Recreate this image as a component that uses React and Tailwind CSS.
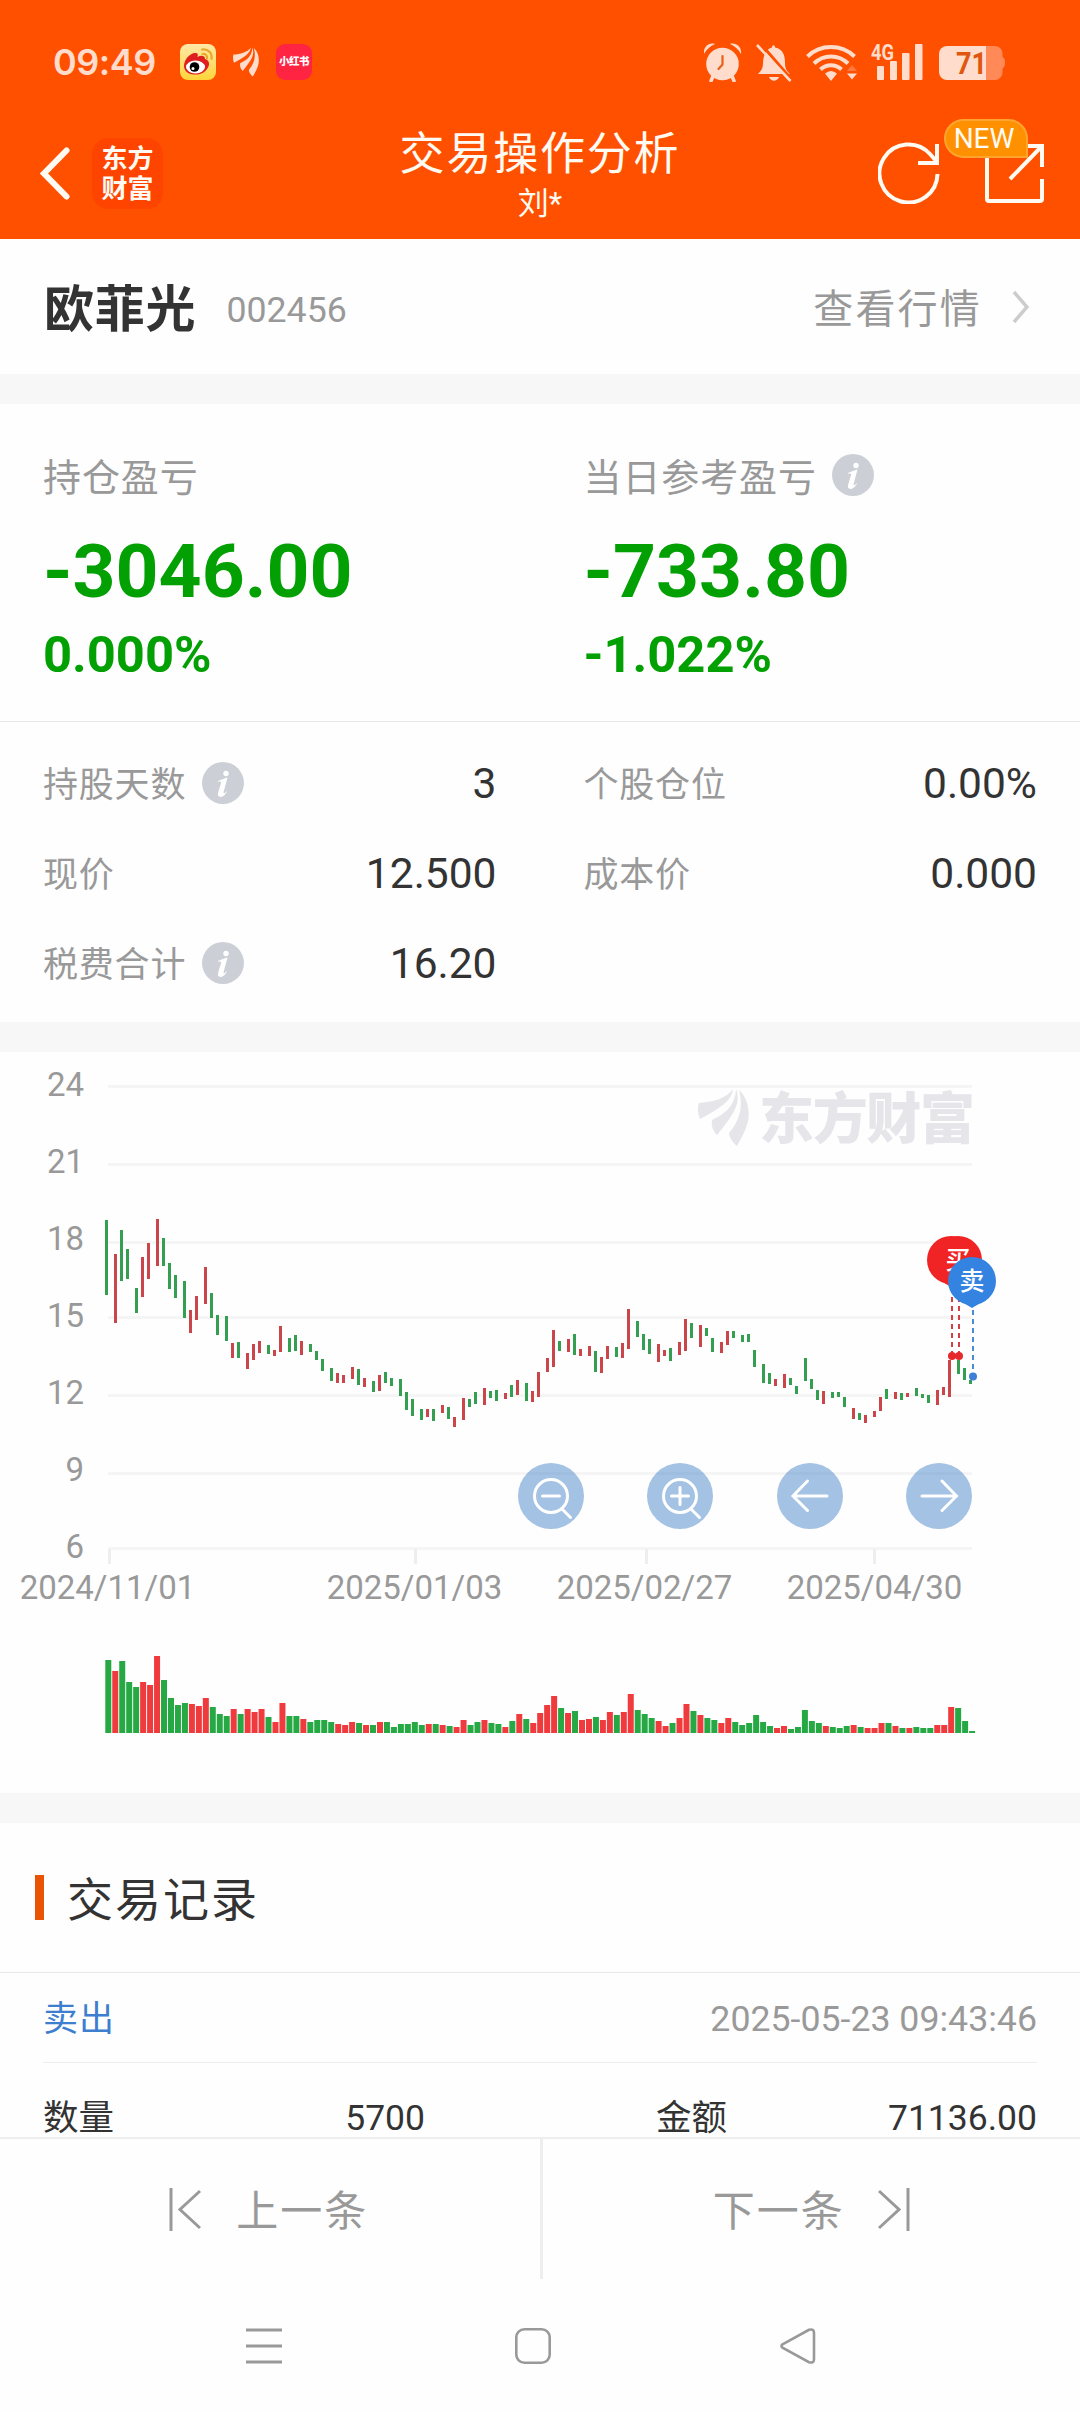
import React from "react";

// [direction, top, bottom, volume], g = falling day, r = rising day
const CANDLES = [
  ["g", 20, 95, 73], ["r", 54, 123, 62], ["g", 30, 81, 72], ["g", 49, 79, 51],
  ["g", 88, 113, 46], ["r", 57, 97, 51], ["r", 43, 79, 48], ["r", 19, 66, 77],
  ["g", 38, 66, 53], ["g", 63, 89, 35], ["g", 75, 98, 28], ["g", 81, 118, 30],
  ["r", 110, 133, 29], ["r", 96, 120, 27], ["r", 67, 104, 35], ["g", 93, 118, 26],
  ["g", 115, 135, 19], ["g", 116, 141, 17], ["r", 143, 158, 24], ["g", 142, 158, 19],
  ["r", 153, 169, 24], ["r", 144, 160, 21], ["r", 141, 153, 24], ["g", 145, 154, 16],
  ["r", 150, 156, 11], ["r", 126, 152, 30], ["g", 138, 152, 17], ["g", 135, 151, 17],
  ["r", 141, 155, 14], ["g", 144, 152, 11], ["g", 151, 160, 13], ["g", 159, 171, 13],
  ["g", 168, 181, 11], ["r", 173, 183, 9], ["r", 175, 183, 8], ["r", 167, 179, 11],
  ["g", 169, 185, 10], ["r", 178, 187, 8], ["g", 181, 192, 8], ["r", 175, 191, 11],
  ["g", 172, 183, 11], ["g", 178, 186, 6], ["g", 179, 196, 9], ["g", 192, 210, 9],
  ["g", 199, 216, 11], ["g", 209, 220, 8], ["r", 209, 217, 9], ["g", 209, 221, 9],
  ["r", 205, 213, 8], ["g", 207, 219, 7], ["r", 217, 227, 6], ["r", 198, 220, 13],
  ["g", 199, 207, 8], ["g", 192, 204, 11], ["r", 188, 205, 13], ["g", 191, 198, 10],
  ["g", 190, 201, 9], ["r", 193, 199, 6], ["g", 185, 197, 12], ["r", 180, 195, 19],
  ["g", 183, 201, 14], ["r", 191, 202, 10], ["r", 172, 197, 20], ["r", 158, 172, 28],
  ["r", 130, 167, 37], ["g", 141, 151, 25], ["r", 139, 152, 20], ["g", 134, 155, 22],
  ["r", 149, 156, 13], ["r", 146, 156, 14], ["g", 151, 172, 16], ["r", 157, 173, 13],
  ["r", 146, 159, 21], ["g", 147, 157, 18], ["r", 143, 158, 21], ["r", 109, 149, 39],
  ["g", 121, 137, 23], ["g", 134, 150, 19], ["g", 139, 154, 15], ["r", 144, 162, 12],
  ["r", 150, 156, 7], ["g", 148, 161, 10], ["r", 142, 155, 15], ["r", 119, 151, 29],
  ["g", 123, 138, 22], ["r", 125, 147, 18], ["g", 128, 136, 15], ["g", 138, 152, 13],
  ["r", 142, 153, 10], ["r", 131, 145, 15], ["g", 131, 138, 11], ["g", 135, 142, 8],
  ["g", 134, 142, 10], ["g", 150, 167, 18], ["g", 164, 183, 11], ["g", 173, 184, 7],
  ["r", 179, 186, 5], ["r", 174, 188, 7], ["g", 178, 185, 4], ["g", 186, 194, 6],
  ["g", 158, 181, 23], ["g", 179, 189, 12], ["g", 190, 200, 10], ["r", 191, 204, 7],
  ["g", 192, 198, 6], ["g", 192, 197, 5], ["g", 197, 207, 7], ["r", 208, 219, 8],
  ["g", 213, 220, 6], ["r", 215, 223, 5], ["r", 211, 217, 5], ["r", 197, 211, 10],
  ["g", 189, 199, 10], ["r", 192, 199, 7], ["g", 193, 200, 5], ["r", 193, 197, 5],
  ["g", 188, 196, 6], ["g", 194, 198, 5], ["g", 195, 203, 5], ["r", 190, 205, 8],
  ["r", 187, 195, 8], ["r", 160, 197, 26], ["g", 160, 174, 25], ["g", 168, 180, 12],
  ["g", 180, 184, 2],
];

const PRICE_LINES = [
  { label: "24", y: 33 },
  { label: "21", y: 111 },
  { label: "18", y: 189 },
  { label: "15", y: 264 },
  { label: "12", y: 342 },
  { label: "9", y: 420 },
  { label: "6", y: 495 },
];

const DATES = [
  { label: "2024/11/01", x: 107.5, tick: 108 },
  { label: "2025/01/03", x: 414.5, tick: 414 },
  { label: "2025/02/27", x: 644.5, tick: 645 },
  { label: "2025/04/30", x: 874.5, tick: 873 },
];

const STATS = [
  { label: "持股天数", value: "3", info: true },
  { label: "个股仓位", value: "0.00%" },
  { label: "现价", value: "12.500" },
  { label: "成本价", value: "0.000" },
  { label: "税费合计", value: "16.20", info: true },
];

const Feather = ({ className }) => (
  <svg viewBox="0 0 51 57" className={className} fill="currentColor">
    <path d="M1 14C14 13 28 10 35 0c-1 11-12 19-33 30C0 25-1 19 1 14Z" />
    <path d="M38 0c5 14-1 24-19 46-4-4-6-9-5-15C26 25 37 18 38 0Z" />
    <path d="M41 1c9 8 11 22 9 31-2 10-7 17-11 25-4-3-8-9-8-13C40 33 46 20 41 1Z" />
  </svg>
);

const InfoIcon = () => (
  <svg viewBox="0 0 42 42" className="w-[42px] h-[42px] shrink-0">
    <circle cx="21" cy="21" r="21" fill="#ccd0d6" />
    <circle cx="24" cy="11.5" r="2.7" fill="#fff" />
    <path
      d="M16 19Q20 17 25.5 15.500L21.600 30Q21.300 32 22.800 31L25.200 28.700Q22.800 34.800 18.500 35Q15 34.500 16.200 30.500L19.200 20.500Q19.300 19 16 19.800Z"
      fill="#fff"
    />
  </svg>
);

const StatusBar = () => (
  <div className="flex items-center justify-between h-[124px] pl-[53px] pr-[75px] text-[#ffdccb]">
    <div className="flex items-center">
      <span className="font-['Inter',sans-serif] font-semibold text-[36px] leading-none tracking-[-0.500px] w-[127px]">
        09:49
      </span>
      <svg viewBox="0 0 36 36" className="w-9 h-9">
        <defs>
          <linearGradient id="weiboBg" x1="0" y1="0" x2="0" y2="1">
            <stop offset="0" stopColor="#ffe9a8" />
            <stop offset="1" stopColor="#ffd43a" />
          </linearGradient>
        </defs>
        <rect width="36" height="36" rx="8" fill="url(#weiboBg)" />
        <path
          d="M4 22C4 15 11 8 16 9c2 0 2 2 1.500 4C21 11 25 11.500 25 15c4 1 5 5 3 8.500C25 29 19 31 14 30.500 8 30 4 27 4 22Z"
          fill="#e01e20"
        />
        <ellipse cx="15.500" cy="23" rx="9.500" ry="6.500" fill="#fff" />
        <circle cx="14.500" cy="23" r="4.800" fill="#000" />
        <circle cx="13" cy="24.500" r="1.500" fill="#fff" />
        <path
          d="M22 5.500c6-1 10.500 3.500 9.500 9.500M22.500 10c3-.5 5 1.500 4.500 4.500"
          fill="none"
          stroke="#e8a92e"
          strokeWidth="2.200"
          strokeLinecap="round"
        />
      </svg>
      <Feather className="w-[26px] h-[30px] ml-[17px]" />
      <div className="ml-[17px] w-9 h-9 rounded-[9px] bg-[#ff2442] flex items-center justify-center text-white text-[10.500px] font-black leading-none tracking-[-0.5px]">
        小红书
      </div>
    </div>
    <svg viewBox="704 42 301 40" className="w-[301px] h-10" fill="currentColor">
      {/* alarm */}
      <circle cx="722.500" cy="64" r="16.300" />
      <path d="M704 54c-1-7 5-12 11-10-5 2-8 5-11 10ZM741 54c1-7-5-12-11-10 5 2 8 5 11 10Z" />
      <path d="M713 76l-2 5M732 76l2 5" stroke="currentColor" strokeWidth="3.500" strokeLinecap="round" />
      <path d="M722.500 56v8.500l-4 4.500" fill="none" stroke="#e8601c" strokeWidth="2.200" strokeLinecap="round" />
      {/* muted bell */}
      <path d="M758 74c3-3 5-6 5-10 0-9 3-15 9-16.500 0-3 3-3 3 0 8 1.500 10 8 10 15 0 5 1 8 5 11.500ZM769 77h10c-2 5-8 5-10 0Z" />
      <path d="M760 43l32 37" stroke="#ff5000" strokeWidth="3" />
      <path d="M757 45l33.500 36" stroke="currentColor" strokeWidth="2.600" />
      {/* wifi */}
      <path
        d="M807.500 56.500a34 34 0 0 1 47 0M814 63.500a24 24 0 0 1 34 0M820.500 69.500a15 15 0 0 1 21 0"
        fill="none"
        stroke="currentColor"
        strokeWidth="4"
      />
      <path d="M825 73.500q6-5 12 0l-6 7.500ZM847 73.500h10l-5 6Z" />
      <path d="M847 71h10l-5-6Z" fill="#ff7a3f" />
      {/* signal */}
      <text x="871" y="60" fontSize="22" fontWeight="700" textLength="23" lengthAdjust="spacingAndGlyphs" fontFamily="Roboto">
        4G
      </text>
      <rect x="877" y="66" width="7" height="14" rx="1" />
      <rect x="890" y="61" width="7" height="19" rx="1" />
      <rect x="902" y="53" width="7.500" height="27" rx="1" />
      <rect x="915" y="44" width="7.500" height="36" rx="1" />
      {/* battery */}
      <path d="M986 46h9a7.500 7.500 0 0 1 7.500 7.500V57q2.500 1 2.500 5.500t-2.500 6v4a7.500 7.500 0 0 1-7.500 7.500h-9Z" fill="#ff8a57" />
      <path d="M986 46h-39a8 8 0 0 0-8 8v18a8 8 0 0 0 8 8h39Z" />
      <text x="956" y="74" fontSize="31" fontWeight="700" textLength="31" lengthAdjust="spacingAndGlyphs" fill="#e0560f" fontFamily="Roboto">
        71
      </text>
    </svg>
  </div>
);

const TitleBar = () => (
  <div className="flex items-center justify-between h-[115px] pl-[40px] pr-[35px] text-[#fffaf2]">
    <div className="flex items-center w-[280px] pb-[16px]">
      <svg viewBox="0 0 30 53" className="w-[30px] h-[53px]">
        <path d="M26.500 3.500 4 26.500l22.500 23" fill="none" stroke="currentColor" strokeWidth="6" strokeLinecap="round" />
      </svg>
      <div className="ml-[22px] w-[71px] h-[71px] rounded-2xl bg-[#ff4400] flex items-center justify-center text-center font-bold text-[26px] leading-[30px]">
        东方
        <br />
        财富
      </div>
    </div>
    <div className="flex flex-col items-center pb-[9px] pr-[5px]">
      <h1 className="text-[45px] leading-[54px] tracking-[1.800px] font-normal">交易操作分析</h1>
      <span className="text-[31px] leading-[44px]">刘*</span>
    </div>
    <div className="relative flex items-center justify-end gap-[44px] w-[280px] pb-[17px]">
      <svg viewBox="0 0 62 62" className="w-[62px] h-[62px]" fill="none" stroke="currentColor" strokeWidth="4">
        <path d="M59.500 32A29 29 0 1 1 52 12l7 8" />
        <path d="M59 2v19H40" />
      </svg>
      <svg viewBox="0 0 61 61" className="w-[61px] h-[61px]" fill="none" stroke="currentColor" strokeWidth="4">
        <path d="M3 10v46q0 2 2 2h51q2 0 2-2V36M40 3h18v21M58 3 26 36" />
      </svg>
      <span className="absolute right-[17px] top-[-23px] w-[84px] h-[39px] pr-1 flex items-center justify-center rounded-t-[20px] rounded-bl-[20px] border-2 border-[#ffa52e] bg-[#ff9100] text-[28px] leading-none">
        NEW
      </span>
    </div>
  </div>
);

const Pnl = ({ label, amount, percent, info }) => (
  <div className="flex flex-col">
    <div className="flex items-center h-[56px] gap-[15px]">
      <span className="pt-[6px] text-[38px] tracking-[0.900px] text-[#999]">{label}</span>
      {info && <InfoIcon />}
    </div>
    <span className="mt-[23px] h-[90px] leading-[90px] text-[75px] font-bold">{amount}</span>
    <span className="mt-[9px] h-[60px] leading-[60px] text-[50.700px] font-bold">{percent}</span>
  </div>
);

const Pin = ({ x, y, color, text }) => (
  <g>
    <path d={`M${x - 21} ${y + 11}Q${x - 13} ${y + 20} ${x} ${y + 27}Q${x + 13} ${y + 20} ${x + 21} ${y + 11}Z`} fill={color} />
    <circle cx={x} cy={y} r="24" fill={color} />
    {text && (
      <text x={x} y={y + 9} fontSize="25" fontWeight="500" fill="#fff" textAnchor="middle">
        {text}
      </text>
    )}
  </g>
);

const Chart = () => (
  <section className="relative h-[741px]">
    <svg viewBox="0 0 1080 741" className="block w-[1080px] h-[741px]">
      {PRICE_LINES.map((line, i) => (
        <g key={line.label}>
          <rect x="108" y={line.y} width="864" height="3" fill="#f5f5f5" />
          <text x="84" y={44 + i * 77} fontSize="33" fill="#999" textAnchor="end">
            {line.label}
          </text>
        </g>
      ))}
      {DATES.map((date) => (
        <g key={date.label}>
          <rect x={date.tick} y="497" width="3" height="15" fill="#eee" />
          <text x={date.x} y="547" fontSize="33" fill="#999" textAnchor="middle">
            {date.label}
          </text>
        </g>
      ))}

      <text x="759" y="86" fontSize="55" fontWeight="900" fill="#e6e5ea" textLength="216">
        东方财富
      </text>

      {CANDLES.map(([dir, top, bottom, volume], i) => (
        <g key={i}>
          <rect
            x={105 + 3 * Math.floor(i * 2.3226 + 0.745)}
            y={148 + top}
            width="3"
            height={bottom - top}
            fill={dir === "g" ? "#349f50" : "#cb464a"}
          />
          <rect
            x={105.3 + i * 6.966}
            y={681 - volume}
            width="6"
            height={volume}
            fill={dir === "g" ? "#26a944" : "#ef3a3e"}
          />
        </g>
      ))}

      <g strokeWidth="2" strokeDasharray="5 4">
        <path d="M952 236v65M959 236v65" stroke="#cf4146" />
        <path d="M973 258v62" stroke="#4d8bd0" />
      </g>
      <g fill="#e52a2c">
        <circle cx="952" cy="304" r="4" />
        <circle cx="959" cy="304" r="4" />
      </g>
      <circle cx="973" cy="324.500" r="4" fill="#3c80d8" />
      <Pin x={951} y={208} color="#f12425" />
      <Pin x={958} y={208} color="#f12425" text="买" />
      <Pin x={972} y={229} color="#3583e0" text="卖" />
    </svg>
    <Feather className="absolute left-[698px] top-[37px] w-[51px] h-[57px] text-[#e6e5ea]" />

    <div className="absolute left-[518px] top-[411px] flex gap-[63.250px]">
      <ChartButton>
        <circle cx="33" cy="33" r="16.500" />
        <path d="M24.500 33h17M44.500 46.500l8 8" />
      </ChartButton>
      <ChartButton>
        <circle cx="33" cy="33" r="16.500" />
        <path d="M24.500 33h17M33 24.500v17M44.500 46.500l8 8" />
      </ChartButton>
      <ChartButton>
        <path d="M50 33H16M30.500 18 16 33l14.500 14.500" />
      </ChartButton>
      <ChartButton>
        <path d="M16 33h34M36 18l14.500 15L36 47.500" />
      </ChartButton>
    </div>
  </section>
);

const ChartButton = ({ children }) => (
  <button className="w-[66px] h-[66px] rounded-full bg-[#4a86c8]/50">
    <svg viewBox="0 0 66 66" fill="none" stroke="#fff" strokeWidth="3" strokeLinecap="round">
      {children}
    </svg>
  </button>
);

const Records = () => (
  <section className="h-[314px] overflow-hidden text-[#333]">
    <div className="flex items-center h-[150px] pl-[35px] border-b border-[#e8e8e8]">
      <span className="w-[9px] h-[45px] bg-[#e85404]" />
      <h2 className="ml-[23px] pt-[6px] text-[46px] tracking-[2px]">交易记录</h2>
    </div>
    <div className="mx-[43px] flex items-center justify-between h-[90px] pt-[5px] border-b border-[#eee] text-[35.700px]">
      <span className="text-[#3d7fce] text-[35px] tracking-[1px]">卖出</span>
      <span className="text-[#999]">2025-05-23 09:43:46</span>
    </div>
    <div className="mx-[43px] grid grid-cols-[1fr_612px] h-[111px] items-center text-[35.500px]">
      <div className="flex justify-between">
        <span>数量</span>
        <span>5700</span>
      </div>
      <div className="flex justify-between pl-[231px]">
        <span>金额</span>
        <span>71136.00</span>
      </div>
    </div>
  </section>
);

const Pager = () => (
  <div className="flex h-[142px] border-t-2 border-[#eee] text-[#999] text-[42px] tracking-[2px]">
    <button className="flex-1 flex items-center justify-center gap-[35px] border-r border-[#eee] pr-[2px]">
      <svg viewBox="0 0 32 43" className="w-8 h-[43px]" fill="none" stroke="currentColor" strokeWidth="3">
        <path d="M2 0v43M31 3 11 21.500 31 40" />
      </svg>
      <span className="pt-[4px]">上一条</span>
    </button>
    <button className="flex-1 flex items-center justify-center gap-[33px] border-l-2 border-[#eee]">
      <span className="pt-[4px]">下一条</span>
      <svg viewBox="0 0 32 43" className="w-8 h-[43px]" fill="none" stroke="currentColor" strokeWidth="3">
        <path d="M30 0v43M1 3l20 18.500L1 40" />
      </svg>
    </button>
  </div>
);

const SystemNav = () => (
  <nav className="flex-1 flex items-center justify-between pl-[246px] pr-[264px] pt-px text-[#999]">
    <svg viewBox="0 0 36 38" className="w-9 h-[38px]" stroke="currentColor" strokeWidth="2.800">
      <path d="M0 3h36M0 19h36M0 35h36" />
    </svg>
    <svg viewBox="0 0 36 36" className="ml-[3px] w-9 h-9" fill="none" stroke="currentColor" strokeWidth="2.600">
      <rect x="1.300" y="1.300" width="33.400" height="33.400" rx="8" />
    </svg>
    <svg viewBox="0 0 36 36" className="w-9 h-9" fill="none" stroke="currentColor" strokeWidth="2.600">
      <path d="M2.500 16.300 29 1.800q5-1.500 5 3v26.400q0 4.500-5 3L2.500 19.700q-2-1.700 0-3.400Z" />
    </svg>
  </nav>
);

const App = () => {
  return (
    <main className="flex flex-col w-[1080px] h-[2412px] overflow-hidden bg-[#fefefe] font-['Roboto','Noto_Sans_CJK_SC',sans-serif]">
      <header className="bg-[#ff5000]">
        <StatusBar />
        <TitleBar />
      </header>

      <section className="flex items-center justify-between h-[135px] pl-[44px] pr-[51px]">
        <div className="flex items-center pt-[8px]">
          <span className="text-[50px] font-bold tracking-[0.800px] text-[#333]">欧菲光</span>
          <span className="ml-[30px] text-[35.700px] text-[#999]">002456</span>
        </div>
        <div className="flex items-center text-[40px] tracking-[2.200px] text-[#999]">
          <span className="pt-[6px]">查看行情</span>
          <svg viewBox="0 0 17 34" className="ml-[30px] w-[17px] h-[34px]">
            <path d="M2 2l13 15L2 32" fill="none" stroke="#ccc" strokeWidth="3.500" />
          </svg>
        </div>
      </section>
      <div className="h-[30px] bg-[#f7f7f7]" />

      <section className="grid grid-cols-2 gap-x-[87px] h-[318px] px-[43px] pt-[43px] border-b border-[#e8e8e8] text-[#03a003]">
        <Pnl label="持仓盈亏" amount="-3046.00" percent="0.000%" />
        <Pnl label="当日参考盈亏" amount="-733.80" percent="-1.022%" info />
      </section>

      <section className="grid grid-cols-2 auto-rows-[90px] gap-x-[87px] h-[300px] px-[43px] pt-[16px]">
        {STATS.map((stat) => (
          <div key={stat.label} className="flex items-center justify-between">
            <div className="flex items-center gap-[16px]">
              <span className="pt-[6px] text-[35px] tracking-[0.800px] text-[#999]">{stat.label}</span>
              {stat.info && <InfoIcon />}
            </div>
            <span className="pt-[2px] text-[42.500px] text-[#333]">{stat.value}</span>
          </div>
        ))}
      </section>
      <div className="h-[30px] bg-[#f7f7f7]" />

      <Chart />
      <div className="h-[30px] bg-[#f7f7f7]" />

      <Records />
      <Pager />
      <SystemNav />
    </main>
  );
};

export default App;
